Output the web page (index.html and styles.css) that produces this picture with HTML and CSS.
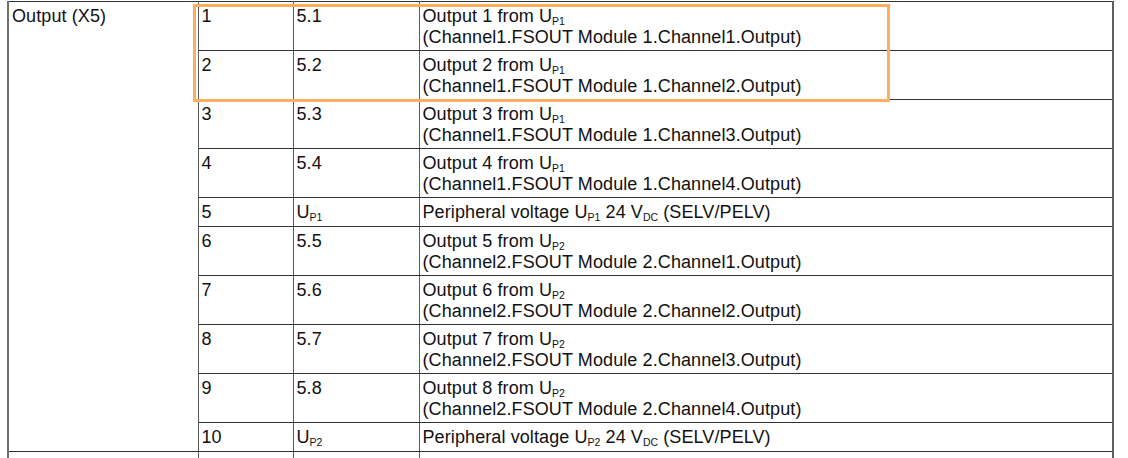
FILE: index.html
```html
<!DOCTYPE html>
<html>
<head>
<meta charset="utf-8">
<link rel="stylesheet" href="styles.css">
</head>
<body>
<div class="wrap">
  <table class="pins">
    <colgroup>
      <col class="c1"><col class="c2"><col class="c3"><col class="c4">
    </colgroup>
    <tbody>
      <tr class="two">
        <td rowspan="10">Output (X5)</td>
        <td>1</td><td>5.1</td>
        <td>Output 1 from U<sub>P1</sub><br>(Channel1.FSOUT Module 1.Channel1.Output)</td>
      </tr>
      <tr class="two">
        <td>2</td><td>5.2</td>
        <td>Output 2 from U<sub>P1</sub><br>(Channel1.FSOUT Module 1.Channel2.Output)</td>
      </tr>
      <tr class="two">
        <td>3</td><td>5.3</td>
        <td>Output 3 from U<sub>P1</sub><br>(Channel1.FSOUT Module 1.Channel3.Output)</td>
      </tr>
      <tr class="two">
        <td>4</td><td>5.4</td>
        <td>Output 4 from U<sub>P1</sub><br>(Channel1.FSOUT Module 1.Channel4.Output)</td>
      </tr>
      <tr class="one">
        <td>5</td><td>U<sub>P1</sub></td>
        <td>Peripheral voltage U<sub>P1</sub> 24 V<sub>DC</sub> (SELV/PELV)</td>
      </tr>
      <tr class="two">
        <td>6</td><td>5.5</td>
        <td>Output 5 from U<sub>P2</sub><br>(Channel2.FSOUT Module 2.Channel1.Output)</td>
      </tr>
      <tr class="two">
        <td>7</td><td>5.6</td>
        <td>Output 6 from U<sub>P2</sub><br>(Channel2.FSOUT Module 2.Channel2.Output)</td>
      </tr>
      <tr class="two">
        <td>8</td><td>5.7</td>
        <td>Output 7 from U<sub>P2</sub><br>(Channel2.FSOUT Module 2.Channel3.Output)</td>
      </tr>
      <tr class="two">
        <td>9</td><td>5.8</td>
        <td>Output 8 from U<sub>P2</sub><br>(Channel2.FSOUT Module 2.Channel4.Output)</td>
      </tr>
      <tr class="one">
        <td>10</td><td>U<sub>P2</sub></td>
        <td>Peripheral voltage U<sub>P2</sub> 24 V<sub>DC</sub> (SELV/PELV)</td>
      </tr>
      <tr class="one">
        <td>Input (X4)</td><td>1</td><td>4.1</td>
        <td>Input 1 from U<sub>P1</sub></td>
      </tr>
    </tbody>
  </table>
  <div class="highlight"></div>
</div>
</body>
</html>
```

FILE: styles.css
```css
html, body {
  margin: 0;
  padding: 0;
  background: #ffffff;
  overflow: hidden;
}

.wrap {
  position: relative;
  padding-left: 7px;
  padding-top: 1px;
  font-family: "Liberation Sans", Arial, sans-serif;
  font-size: 18px;
  letter-spacing: 0.1px;
  color: #111111;
}

.pins {
  border-collapse: collapse;
  table-layout: fixed;
  width: 1105px;
  border-top: 1px solid #404040;
  border-left: 2px solid #707070;
  border-right: 2px solid #606060;
}

.c1 { width: 190px; }
.c2 { width: 95px; }
.c3 { width: 126px; }
.c4 { width: 694px; }

.pins td {
  border: 1px solid #333333;
  border-left-color: #5a5a5a;
  border-right-color: #5a5a5a;
  padding: 4px 3px 2px 3px;
  line-height: 21px;
  vertical-align: top;
  white-space: nowrap;
}

.pins tr:first-child td:first-child {
  border-left: 2px solid #707070;
}

.pins tr.one td {
  padding-bottom: 3px;
}

.pins sub {
  font-size: 10.5px;
  letter-spacing: 0;
  line-height: 0;
  vertical-align: -3px;
}

.highlight {
  position: absolute;
  left: 193px;
  top: 4px;
  width: 697px;
  height: 98px;
  box-sizing: border-box;
  border: 3px solid #fdae61;
  pointer-events: none;
}
```
